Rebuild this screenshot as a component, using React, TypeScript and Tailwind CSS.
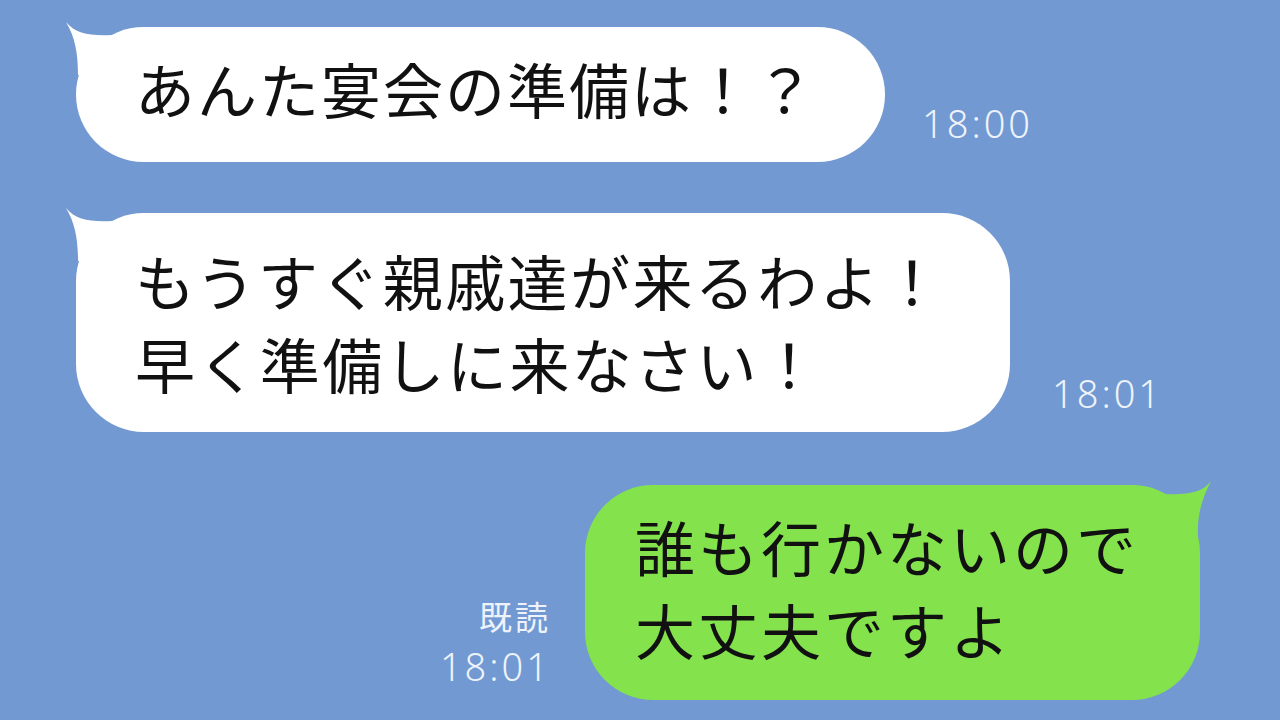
import React from 'react';

const jp = { fontFamily: '"Noto Sans CJK JP", "Noto Sans", sans-serif' };
const num = { fontFamily: '"Noto Sans", "Open Sans", sans-serif' };

function TailLeft() {
    return (
        <svg className="absolute -left-[12px] -top-[8px]" width="60" height="60" viewBox="0 0 60 60">
            <path d="M2 3 C 12 15, 26 17, 48 16 L 48 56 L 14 56 C 14 34, 11 18, 2 3 Z" fill="#ffffff" />
        </svg>
    );
}

function TailRight() {
    return (
        <svg className="absolute -right-[13px] -top-[6px]" width="60" height="60" viewBox="0 0 60 60">
            <path d="M58 2 C 50 13, 36 16, 12 15 L 12 56 L 45 56 C 44 34, 50 18, 58 2 Z" fill="#84e24c" />
        </svg>
    );
}

function Time({ children, className = '' }: { children: React.ReactNode; className?: string }) {
    return (
        <div className={`text-[38px] font-light text-[#eef3fb] leading-none tracking-[3px] ${className}`} style={num}>
            {children}
        </div>
    );
}

export default function App() {
    return (
        <div className="w-[1280px] h-[720px] bg-[#7399d2] overflow-hidden flex flex-col pt-[27px]" style={jp}>
            {/* 1 */}
            <div className="flex items-end pl-[76px]">
                <div className="relative w-[809px] h-[135px] bg-white rounded-[68px] flex items-center pl-[59px] pb-[14px]">
                    <TailLeft />
                    <span className="relative text-[60px] tracking-[2px] text-[#111] leading-none">あんた宴会の準備は！？</span>
                </div>
                <Time className="ml-[37px] mb-[20px]">18:00</Time>
            </div>

            {/* 2 */}
            <div className="flex items-end pl-[76px] mt-[51px]">
                <div className="relative w-[934px] h-[219px] bg-white rounded-[68px] flex flex-col justify-center pl-[59px] pb-[4px]">
                    <TailLeft />
                    <div className="relative text-[60px] tracking-[2.4px] text-[#111] leading-[83px]">
                        <div>もうすぐ親戚達が来るわよ！</div>
                        <div>早く準備しに来なさい！</div>
                    </div>
                </div>
                <Time className="ml-[42px] mb-[20px]">18:01</Time>
            </div>

            {/* 3 */}
            <div className="flex items-end justify-end pr-[80px] mt-[53px]">
                <div className="flex flex-col items-end mr-[34px] mb-[15px] gap-[14px]">
                    <div className="text-[33px] text-[#eef3fb] leading-none tracking-[3px]">既読</div>
                    <Time>18:01</Time>
                </div>
                <div className="relative w-[615px] h-[215px] bg-[#84e24c] rounded-[68px] flex flex-col justify-center pl-[50px] pb-[12px]">
                    <TailRight />
                    <div className="relative text-[60px] tracking-[3px] text-[#111] leading-[83px]">
                        <div>誰も行かないので</div>
                        <div>大丈夫ですよ</div>
                    </div>
                </div>
            </div>
        </div>
    );
}
